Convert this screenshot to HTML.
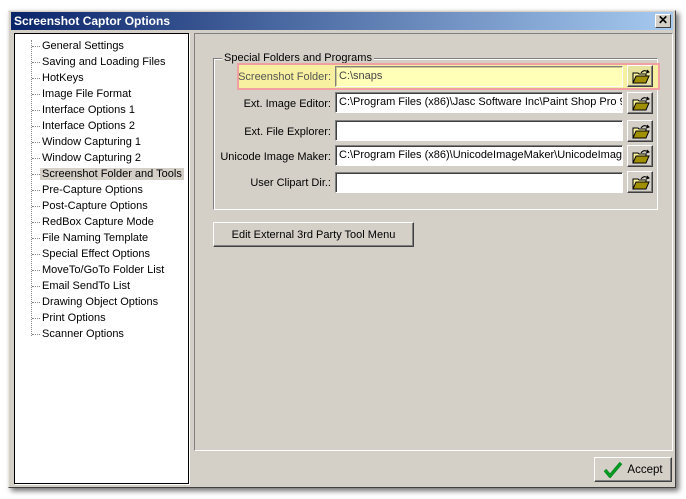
<!DOCTYPE html>
<html><head><style>
*{margin:0;padding:0;box-sizing:border-box}
body{width:686px;height:499px;background:#fff;position:relative;overflow:hidden;font-family:"Liberation Sans",sans-serif;font-size:11px;color:#000}
.a{position:absolute}
.win{left:8px;top:10px;width:668px;height:478px;background:#d4d0c8;border:1px solid;border-color:#e8e6e0 #404040 #404040 #e8e6e0;box-shadow:3px 3px 5px rgba(0,0,0,.55)}
.title{left:11px;top:12px;width:662px;height:18px;background:linear-gradient(to right,#0a246a,#a6caf0);color:#fff;font-weight:bold;font-size:12px;line-height:18px;padding-left:3px}
.close{left:655px;top:14px;width:16px;height:14px;background:#d4d0c8;border:1px solid;border-color:#fff #404040 #404040 #fff;font-size:12px;line-height:11px;text-align:center;font-weight:bold;color:#000}
.tree{left:14px;top:33px;width:175px;height:451px;background:#fff;border:1px solid #000;box-shadow:1px 1px 0 #fff}
.it{position:absolute;left:42px;height:15px;line-height:15px;white-space:nowrap}
.it:before{content:"";position:absolute;left:-10px;top:7px;width:8px;border-top:1px dotted #888}
.vl{left:31px;top:40px;height:296px;border-left:1px dotted #888}
.sel{background:#d4d0c8;padding:0 2px;margin-left:-2px}
.panel{left:194px;top:33px;width:479px;height:418px;border:1px solid;border-color:#808080 #fff #fff #808080}
.grp{left:213px;top:58px;width:445px;height:152px;border:1px solid;border-color:#808080 #fff #fff #808080;box-shadow:inset 1px 1px 0 #fff,1px 1px 0 #808080 inset}
.leg{left:222px;top:52px;background:#d4d0c8;padding:0 2px;line-height:13px}
.lbl{position:absolute;right:355px;text-align:right;white-space:nowrap;line-height:14px}
.inp{position:absolute;left:335px;width:288px;height:21px;background:#fff;border:1px solid;border-color:#808080 #fff #fff #808080;box-shadow:inset 1px 1px 0 #404040;padding:2px 3px;line-height:15px;white-space:nowrap;overflow:hidden}
.fb{position:absolute;left:627px;width:26px;height:22px;background:#d4d0c8;border:1px solid;border-color:#fff #404040 #404040 #fff;box-shadow:inset -1px -1px 0 #808080}
.fb svg{position:absolute;left:4px;top:3px}
.btn{background:#d4d0c8;border:1px solid;border-color:#fff #404040 #404040 #fff;box-shadow:inset -1px -1px 0 #808080;text-align:center}
</style></head><body>
<div class="a win"></div>
<div class="a title">Screenshot Captor Options</div>
<div class="a close">✕</div>
<div class="a tree"></div>
<div class="a vl"></div>
<div class="it" style="top:39px">General Settings</div>
<div class="it" style="top:55px">Saving and Loading Files</div>
<div class="it" style="top:71px">HotKeys</div>
<div class="it" style="top:87px">Image File Format</div>
<div class="it" style="top:103px">Interface Options 1</div>
<div class="it" style="top:119px">Interface Options 2</div>
<div class="it" style="top:135px">Window Capturing 1</div>
<div class="it" style="top:151px">Window Capturing 2</div>
<div class="it" style="top:167px"><span class="sel">Screenshot Folder and Tools</span></div>
<div class="it" style="top:183px">Pre-Capture Options</div>
<div class="it" style="top:199px">Post-Capture Options</div>
<div class="it" style="top:215px">RedBox Capture Mode</div>
<div class="it" style="top:231px">File Naming Template</div>
<div class="it" style="top:247px">Special Effect Options</div>
<div class="it" style="top:263px">MoveTo/GoTo Folder List</div>
<div class="it" style="top:279px">Email SendTo List</div>
<div class="it" style="top:295px">Drawing Object Options</div>
<div class="it" style="top:311px">Print Options</div>
<div class="it" style="top:327px">Scanner Options</div>

<div class="a panel"></div>
<div class="a grp"></div>
<div class="a leg">Special Folders and Programs</div>
<div class="a" style="left:237px;top:63px;width:423px;height:27px;background:#f7f0a0;border:2px solid #f0a0a0"></div>

<div class="lbl" style="top:70px;color:#555">Screenshot Folder:</div>
<div class="inp" style="top:66px;background:#ffffb8;box-shadow:inset 1px 1px 0 #c8c890;color:#444">C:\snaps</div>
<div class="lbl" style="top:97px">Ext. Image Editor:</div>
<div class="inp" style="top:92px">C:\Program Files (x86)\Jasc Software Inc\Paint Shop Pro 9</div>
<div class="lbl" style="top:125px">Ext. File Explorer:</div>
<div class="inp" style="top:120px"></div>
<div class="lbl" style="top:150px">Unicode Image Maker:</div>
<div class="inp" style="top:145px">C:\Program Files (x86)\UnicodeImageMaker\UnicodeImage</div>
<div class="lbl" style="top:176px">User Clipart Dir.:</div>
<div class="inp" style="top:172px"></div>

<svg width="0" height="0" style="position:absolute"><defs><g id="f"><path d="M1 4h5l1 1h7v9H1z" fill="#fff8a0" stroke="#000" stroke-width="1"/><path d="M1 14l3-7h13l-3 7z" fill="#a09000" stroke="#000" stroke-width="1"/><path d="M9 4q3-4 7-1" fill="none" stroke="#000"/><path d="M15 1l2 2-3 1" fill="none" stroke="#000"/></g></defs></svg>
<div class="fb" style="top:65px;background:#e8e4a0"><svg width="18" height="16"><use href="#f"/></svg></div>
<div class="fb" style="top:92px"><svg width="18" height="16"><use href="#f"/></svg></div>
<div class="fb" style="top:120px"><svg width="18" height="16"><use href="#f"/></svg></div>
<div class="fb" style="top:145px"><svg width="18" height="16"><use href="#f"/></svg></div>
<div class="fb" style="top:171px"><svg width="18" height="16"><use href="#f"/></svg></div>

<div class="a btn" style="left:213px;top:222px;width:201px;height:25px;line-height:24px">Edit External 3rd Party Tool Menu</div>
<div class="a btn" style="left:594px;top:457px;width:78px;height:25px;line-height:24px;padding-left:24px;font-size:11.5px">Accept
<svg class="a" style="left:8px;top:3px" width="20" height="17"><path d="M2 9l5 6L18 2" fill="none" stroke="#0a8a20" stroke-width="3.5"/><path d="M2 9l5 6L18 2" fill="none" stroke="#00a020" stroke-width="1.5"/></svg></div>
</body></html>
